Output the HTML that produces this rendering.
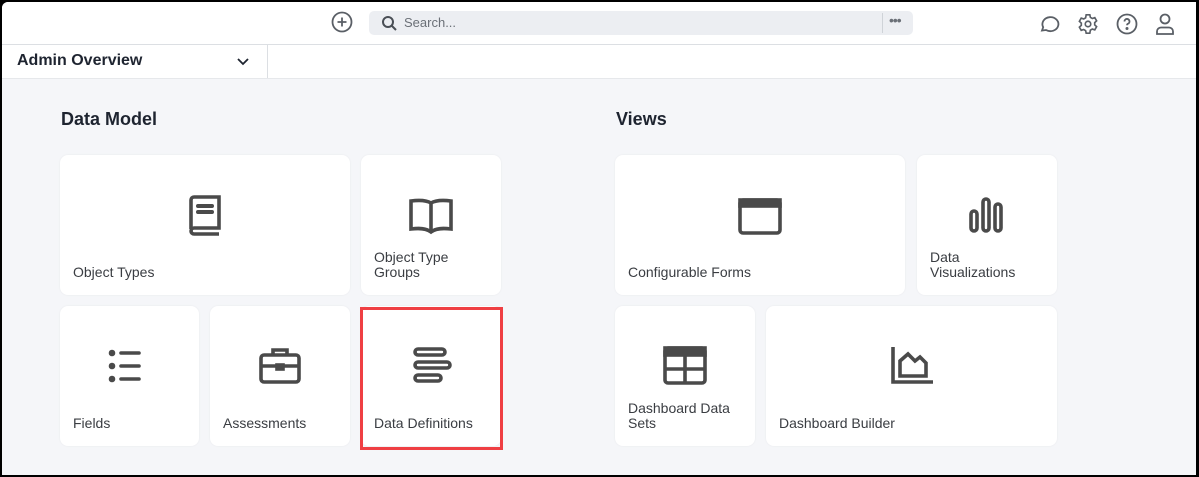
<!DOCTYPE html>
<html><head><meta charset="utf-8"><style>
*{box-sizing:border-box;margin:0;padding:0}
html,body{width:1199px;height:477px;overflow:hidden;background:#000}
.frame{position:absolute;left:2px;top:2px;width:1194px;height:473px;background:#f5f6f9;border-top-left-radius:6px;overflow:hidden;font-family:"Liberation Sans",sans-serif}
.top{position:absolute;left:0;top:0;width:100%;height:43px;background:#fff;border-bottom:1px solid #dcdfe3}
.sub{position:absolute;left:0;top:43px;width:100%;height:34px;background:#fff;border-bottom:1px solid #e6e8eb}
.search{position:absolute;left:367px;top:9px;width:544px;height:24px;background:#eceef2;border-radius:5px}
.search span{position:absolute;left:35px;top:4px;font-size:13px;color:#6b7077}
.search .div{position:absolute;left:513px;top:2px;width:1px;height:20px;background:#cfd3d8}
.dd{position:absolute;left:0;top:0;width:266px;height:33px;border-right:1px solid #dcdfe3}
.dd b{position:absolute;left:15px;top:7px;font-size:16px;color:#1e2430}
h2{position:absolute;font-size:18px;font-weight:bold;color:#1e2430}
.card{position:absolute;background:#fff;border-radius:8px;box-shadow:0 0 2px rgba(0,0,0,.06)}
.card .l{position:absolute;left:13px;bottom:15px;font-size:14px;line-height:15px;color:#3a3d42}
.card svg{position:absolute;top:38px;left:50%;transform:translateX(-50%)}
.red{position:absolute;left:358px;top:305px;width:143px;height:143px;border:3px solid #ef3f43}
</style></head><body><div class="frame">
<div class="top">
<svg style="position:absolute;left:329px;top:9px" width="22" height="22" viewBox="0 0 22 22" fill="none" stroke="#5a5f66" stroke-width="1.8"><circle cx="11" cy="11" r="9.5"/><path d="M11 6.5v9M6.5 11h9"/></svg>
<div class="search"><svg style="position:absolute;left:12px;top:4px" width="17" height="17" viewBox="0 0 17 17" fill="none" stroke="#4a4f56" stroke-width="2"><circle cx="7" cy="7" r="5"/><path d="M10.5 10.5l4.5 4.5"/></svg><span>Search...</span><div class="div"></div><span style="left:520px;top:1px;color:#6b7077;font-size:14px;letter-spacing:-1px">•••</span></div>
<svg style="position:absolute;left:1036px;top:11px" width="22" height="22" viewBox="0 0 22 22" fill="none" stroke="#5a5f66" stroke-width="1.8"><path d="M4 17.5l1.2-3.3A8 7 0 1 1 8 17z"/></svg>
<svg style="position:absolute;left:1075px;top:11px" width="22" height="22" viewBox="0 0 24 24" fill="none" stroke="#5a5f66" stroke-width="1.8"><circle cx="12" cy="12" r="3"/><path d="M10 2h4l.6 2.8 2.1 1.2 2.7-.9 2 3.5-2.1 1.9v2.5l2.1 1.9-2 3.5-2.7-.9-2.1 1.2L14 22h-4l-.6-2.8-2.1-1.2-2.7.9-2-3.5 2.1-1.9v-2.5L2.6 9.1l2-3.5 2.7.9 2.1-1.2z"/></svg>
<svg style="position:absolute;left:1114px;top:11px" width="22" height="22" viewBox="0 0 22 22" fill="none" stroke="#5a5f66" stroke-width="1.8"><circle cx="11" cy="11" r="9.5"/><path d="M8.5 8.5a2.5 2.5 0 1 1 3.3 2.3c-.6.3-.8.8-.8 1.5"/><circle cx="11" cy="15.5" r=".6" fill="#5a5f66"/></svg>
<svg style="position:absolute;left:1152px;top:10px" width="22" height="24" viewBox="0 0 22 24" fill="none" stroke="#5a5f66" stroke-width="1.8"><circle cx="11" cy="7" r="4.5"/><path d="M3 22v-2.5a4 4 0 0 1 4-4h8a4 4 0 0 1 4 4V22z"/></svg>
</div>
<div class="sub"><div class="dd"><b>Admin Overview</b><svg style="position:absolute;left:234px;top:12px" width="14" height="10" viewBox="0 0 14 10" fill="none" stroke="#1e2430" stroke-width="1.8"><path d="M2 2l5 5 5-5"/></svg></div></div>
<h2 style="left:59px;top:107px">Data Model</h2>
<h2 style="left:614px;top:107px">Views</h2>

<div class="card" style="left:58px;top:153px;width:290px;height:140px"><svg width="40" height="44" viewBox="0 0 40 44" fill="none" stroke="#4a4a4a" stroke-width="3.6"><path d="M6 36V7a3 3 0 0 1 3-3h25v31H9a3 3 0 0 0 0 6h25"/><path d="M13 13h14M13 19h14" stroke-linecap="round" stroke-width="4"/></svg><div class="l">Object Types</div></div>
<div class="card" style="left:359px;top:153px;width:140px;height:140px"><svg width="50" height="44" viewBox="0 0 50 44" fill="none" stroke="#4a4a4a" stroke-width="3.6"><path d="M25 38V10c-5-3-12-3-20-2v28c8-1 15-1 20 3 5-4 12-4 20-3V8c-8-1-15-1-20 2"/></svg><div class="l">Object Type<br>Groups</div></div>
<div class="card" style="left:58px;top:304px;width:139px;height:140px"><svg width="44" height="44" viewBox="0 0 44 44" fill="none" stroke="#4a4a4a" stroke-width="3.6" stroke-linecap="round"><path d="M13 9h18M13 22h18M13 35h18"/><circle cx="4" cy="9" r="1.5" fill="#4a4a4a"/><circle cx="4" cy="22" r="1.5" fill="#4a4a4a"/><circle cx="4" cy="35" r="1.5" fill="#4a4a4a"/></svg><div class="l">Fields</div></div>
<div class="card" style="left:208px;top:304px;width:140px;height:140px"><svg width="44" height="44" viewBox="0 0 44 44" fill="none" stroke="#4a4a4a" stroke-width="3.6"><rect x="3" y="11" width="38" height="27" rx="3"/><path d="M15 11V6h14v5M3 22h38"/><rect x="19" y="21" width="6" height="4" fill="#4a4a4a"/></svg><div class="l">Assessments</div></div>
<div class="card" style="left:359px;top:304px;width:140px;height:140px"><svg width="44" height="44" viewBox="0 0 44 44" fill="none" stroke="#4a4a4a" stroke-width="3.6"><rect x="6" y="5" width="30" height="6" rx="3"/><rect x="6" y="18" width="35" height="6" rx="3"/><rect x="6" y="31" width="26" height="6" rx="3"/></svg><div class="l">Data Definitions</div></div>
<div class="red"></div>

<div class="card" style="left:613px;top:153px;width:290px;height:140px"><svg width="44" height="44" viewBox="0 0 44 44" fill="none" stroke="#4a4a4a" stroke-width="3.6"><rect x="2" y="7" width="40" height="33" rx="3"/><rect x="2" y="7" width="40" height="6" fill="#4a4a4a"/></svg><div class="l">Configurable Forms</div></div>
<div class="card" style="left:915px;top:153px;width:140px;height:140px"><svg width="44" height="44" viewBox="0 0 44 44" fill="none" stroke="#4a4a4a" stroke-width="3.6"><rect x="6" y="18" width="6" height="20" rx="3"/><rect x="18" y="6" width="6" height="32" rx="3"/><rect x="30" y="11" width="6" height="27" rx="3"/></svg><div class="l">Data<br>Visualizations</div></div>
<div class="card" style="left:613px;top:304px;width:140px;height:140px"><svg width="44" height="44" viewBox="0 0 44 44" fill="none" stroke="#4a4a4a" stroke-width="3.6"><rect x="2" y="4" width="40" height="35" rx="3"/><rect x="2" y="4" width="40" height="7" fill="#4a4a4a"/><path d="M2 25h40M22 10v29"/></svg><div class="l">Dashboard Data<br>Sets</div></div>
<div class="card" style="left:764px;top:304px;width:291px;height:140px"><svg width="44" height="44" viewBox="0 0 44 44" fill="none" stroke="#4a4a4a" stroke-width="3.6"><path d="M3 3v35h40"/><path d="M10 32V17l8-7 7 7 5-4 6 6v13z"/></svg><div class="l">Dashboard Builder</div></div>
</div></body></html>
